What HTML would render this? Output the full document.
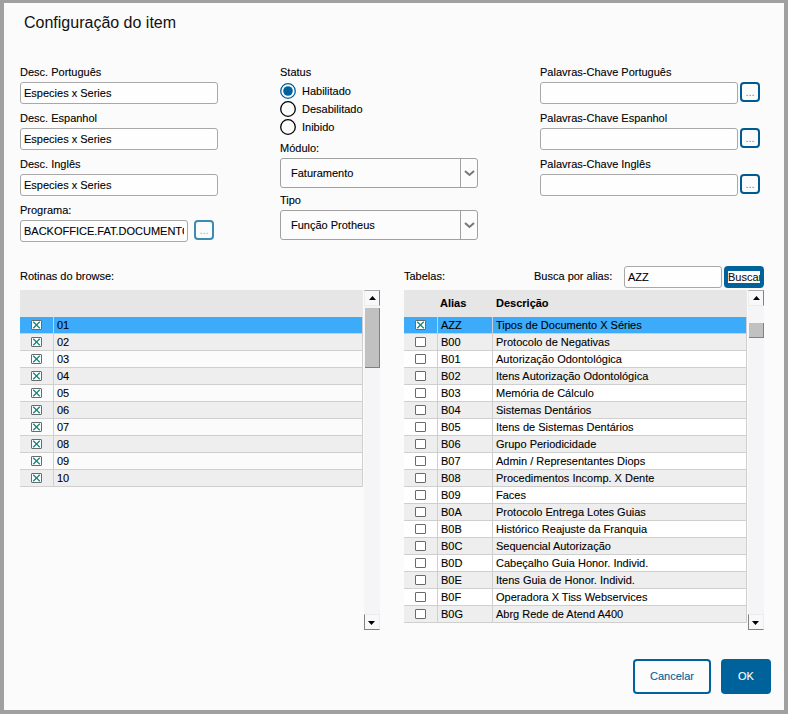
<!DOCTYPE html><html lang="pt"><head><meta charset="utf-8"><title>Configuração do item</title><style>
*{box-sizing:border-box;margin:0;padding:0}
html,body{width:788px;height:714px;overflow:hidden}
body{background:#a0a0a0;font-family:"Liberation Sans",Arial,sans-serif;font-size:11px;color:#000;position:relative;-webkit-text-stroke:0.1px}
#panel{position:absolute;left:4px;top:3px;width:780px;height:707px;background:#fbfbfb}
.a{position:absolute;white-space:nowrap}
.title{left:24px;top:13px;font-size:16px;line-height:20px;color:#111;-webkit-text-stroke:0}
.lbl{font-size:11px;line-height:14px;color:#000}
.inp{height:22px;border:1px solid #a8a8a8;border-radius:3px;background:#fefefe;font-size:11px;line-height:20px;padding:0 3px 0 3px}
.inp u{display:block;text-decoration:none;overflow:hidden;height:20px}
.dots{width:20px;height:20px;border:2px solid #005a92;border-radius:4px;background:#fbfbfb;color:#3f96d0;font-size:11px;line-height:17px;text-align:center}
.dots.dis{border-color:#3d8ab2;color:#8fbdd8}
.sel{height:30px;border:1px solid #a0a0a0;border-radius:3px;background:#fcfcfc;font-size:11px;line-height:28px;padding-left:10px}
.sel i{position:absolute;right:16px;top:0;width:1px;height:28px;background:#a0a0a0}
.sel svg{position:absolute;right:2px;top:11px}
.tbl{background:#fff;overflow:hidden}
.hdr{background:#e6e6e6;height:27px;font-weight:bold;font-size:11px}
.row{position:absolute;left:0;height:17px;width:100%;border-bottom:1px solid #cfcfcf;font-size:11px;line-height:16px}
.row.alt{background:#eee}
.row.sel2{background:#3cabf9}
.row b{position:absolute;top:0;width:1px;height:16px;background:#cfcfcf}
.row span{position:absolute;top:0}
.cb{position:absolute;top:3px;width:11px;height:10px;border:1px solid #6a6a6a;border-radius:1px;background:#fff}
.sb{width:16px;background:#f5f5f8}
.sbb{position:absolute;left:0;width:16px;height:16px;background:#f8f8fa;border:1px solid #ececec}
.sbb.up{border-top-color:#aaa;border-right-color:#808080}
.sbb.dn{border-left-color:#808080;border-bottom-color:#808080}
.thumb{position:absolute;left:1px;width:15px;background:#c1c1c1;border-right:1px solid #808080;border-bottom:1px solid #808080}
.btn{border-radius:4px;font-size:11px;text-align:center}
</style></head><body><div id="panel"></div>
<div class="a title">Configuração do item</div>
<div class="a lbl" style="left:20px;top:65px">Desc. Português</div>
<div class="a inp" style="left:20px;top:82px;width:198px"><u>Especies x Series</u></div>
<div class="a lbl" style="left:20px;top:111px">Desc. Espanhol</div>
<div class="a inp" style="left:20px;top:128px;width:198px"><u>Especies x Series</u></div>
<div class="a lbl" style="left:20px;top:157px">Desc. Inglês</div>
<div class="a inp" style="left:20px;top:174px;width:198px"><u>Especies x Series</u></div>
<div class="a lbl" style="left:20px;top:203px">Programa:</div>
<div class="a inp" style="left:20px;top:220px;width:168px"><u>BACKOFFICE.FAT.DOCUMENTO</u></div>
<div class="a dots dis" style="left:194px;top:220px">...</div>
<div class="a lbl" style="left:280px;top:65px">Status</div>
<svg class="a" style="left:280px;top:83px" width="16" height="16" viewBox="0 0 16 16"><circle cx="8" cy="8" r="7.3" fill="#fbfbfb" stroke="#00629b" stroke-width="1.3"/><circle cx="8" cy="8" r="4.8" fill="#00629b"/></svg>
<div class="a lbl" style="left:302px;top:84px">Habilitado</div>
<svg class="a" style="left:280px;top:101px" width="16" height="16" viewBox="0 0 16 16"><circle cx="8" cy="8" r="7.3" fill="#fbfbfb" stroke="#000" stroke-width="1.3"/></svg>
<div class="a lbl" style="left:302px;top:102px">Desabilitado</div>
<svg class="a" style="left:280px;top:119px" width="16" height="16" viewBox="0 0 16 16"><circle cx="8" cy="8" r="7.3" fill="#fbfbfb" stroke="#000" stroke-width="1.3"/></svg>
<div class="a lbl" style="left:302px;top:120px">Inibido</div>
<div class="a lbl" style="left:280px;top:141px">Módulo:</div>
<div class="a sel" style="left:280px;top:158px;width:198px">Faturamento<i></i><svg width="11" height="7" viewBox="0 0 11 7"><path d="M1 1L5.5 5L10 1" stroke="#777" stroke-width="2" fill="none"/></svg></div>
<div class="a lbl" style="left:280px;top:193px">Tipo</div>
<div class="a sel" style="left:280px;top:210px;width:198px">Função Protheus<i></i><svg width="11" height="7" viewBox="0 0 11 7"><path d="M1 1L5.5 5L10 1" stroke="#777" stroke-width="2" fill="none"/></svg></div>
<div class="a lbl" style="left:540px;top:65px">Palavras-Chave Português</div>
<div class="a inp" style="left:540px;top:82px;width:198px"></div>
<div class="a dots" style="left:740px;top:82px">...</div>
<div class="a lbl" style="left:540px;top:111px">Palavras-Chave Espanhol</div>
<div class="a inp" style="left:540px;top:128px;width:198px"></div>
<div class="a dots" style="left:740px;top:128px">...</div>
<div class="a lbl" style="left:540px;top:157px">Palavras-Chave Inglês</div>
<div class="a inp" style="left:540px;top:174px;width:198px"></div>
<div class="a dots" style="left:740px;top:174px">...</div>
<div class="a lbl" style="left:20px;top:269px">Rotinas do browse:</div>
<div class="a lbl" style="left:404px;top:269px">Tabelas:</div>
<div class="a lbl" style="left:534px;top:269px">Busca por alias:</div>
<div class="a inp" style="left:624px;top:266px;width:98px">AZZ</div>
<div class="a" style="left:724px;top:266px;width:40px;height:22px;border-radius:4px;background:#00629b"><div style="position:absolute;left:4px;top:5px;width:32px;height:12px;background:#fff;overflow:hidden;font-size:11px;line-height:12px;color:#111">Buscar</div></div>
<div class="a tbl" style="left:20px;top:290px;width:343px;height:197px;background:transparent">
<div class="hdr"></div>
<div class="row sel2" style="top:27px"><div class="cb" style="left:11px"><svg width="9" height="8" viewBox="0 0 9 8" style="position:absolute;left:0;top:0"><path d="M1.2 0.8L7.8 7.2M7.8 0.8L1.2 7.2" stroke="#17837e" stroke-width="1.3" fill="none"/></svg></div><b style="left:33px"></b><span style="left:37px">01</span><b style="left:342px"></b></div>
<div class="row alt" style="top:44px"><div class="cb" style="left:11px"><svg width="9" height="8" viewBox="0 0 9 8" style="position:absolute;left:0;top:0"><path d="M1.2 0.8L7.8 7.2M7.8 0.8L1.2 7.2" stroke="#17837e" stroke-width="1.3" fill="none"/></svg></div><b style="left:33px"></b><span style="left:37px">02</span><b style="left:342px"></b></div>
<div class="row" style="top:61px"><div class="cb" style="left:11px"><svg width="9" height="8" viewBox="0 0 9 8" style="position:absolute;left:0;top:0"><path d="M1.2 0.8L7.8 7.2M7.8 0.8L1.2 7.2" stroke="#17837e" stroke-width="1.3" fill="none"/></svg></div><b style="left:33px"></b><span style="left:37px">03</span><b style="left:342px"></b></div>
<div class="row alt" style="top:78px"><div class="cb" style="left:11px"><svg width="9" height="8" viewBox="0 0 9 8" style="position:absolute;left:0;top:0"><path d="M1.2 0.8L7.8 7.2M7.8 0.8L1.2 7.2" stroke="#17837e" stroke-width="1.3" fill="none"/></svg></div><b style="left:33px"></b><span style="left:37px">04</span><b style="left:342px"></b></div>
<div class="row" style="top:95px"><div class="cb" style="left:11px"><svg width="9" height="8" viewBox="0 0 9 8" style="position:absolute;left:0;top:0"><path d="M1.2 0.8L7.8 7.2M7.8 0.8L1.2 7.2" stroke="#17837e" stroke-width="1.3" fill="none"/></svg></div><b style="left:33px"></b><span style="left:37px">05</span><b style="left:342px"></b></div>
<div class="row alt" style="top:112px"><div class="cb" style="left:11px"><svg width="9" height="8" viewBox="0 0 9 8" style="position:absolute;left:0;top:0"><path d="M1.2 0.8L7.8 7.2M7.8 0.8L1.2 7.2" stroke="#17837e" stroke-width="1.3" fill="none"/></svg></div><b style="left:33px"></b><span style="left:37px">06</span><b style="left:342px"></b></div>
<div class="row" style="top:129px"><div class="cb" style="left:11px"><svg width="9" height="8" viewBox="0 0 9 8" style="position:absolute;left:0;top:0"><path d="M1.2 0.8L7.8 7.2M7.8 0.8L1.2 7.2" stroke="#17837e" stroke-width="1.3" fill="none"/></svg></div><b style="left:33px"></b><span style="left:37px">07</span><b style="left:342px"></b></div>
<div class="row alt" style="top:146px"><div class="cb" style="left:11px"><svg width="9" height="8" viewBox="0 0 9 8" style="position:absolute;left:0;top:0"><path d="M1.2 0.8L7.8 7.2M7.8 0.8L1.2 7.2" stroke="#17837e" stroke-width="1.3" fill="none"/></svg></div><b style="left:33px"></b><span style="left:37px">08</span><b style="left:342px"></b></div>
<div class="row" style="top:163px"><div class="cb" style="left:11px"><svg width="9" height="8" viewBox="0 0 9 8" style="position:absolute;left:0;top:0"><path d="M1.2 0.8L7.8 7.2M7.8 0.8L1.2 7.2" stroke="#17837e" stroke-width="1.3" fill="none"/></svg></div><b style="left:33px"></b><span style="left:37px">09</span><b style="left:342px"></b></div>
<div class="row alt" style="top:180px"><div class="cb" style="left:11px"><svg width="9" height="8" viewBox="0 0 9 8" style="position:absolute;left:0;top:0"><path d="M1.2 0.8L7.8 7.2M7.8 0.8L1.2 7.2" stroke="#17837e" stroke-width="1.3" fill="none"/></svg></div><b style="left:33px"></b><span style="left:37px">10</span><b style="left:342px"></b></div>
</div>
<div class="a sb" style="left:364px;top:290px;height:340px"><div class="sbb up" style="top:0"><svg width="7" height="4" viewBox="0 0 7 4" style="position:absolute;left:4px;top:5px"><path d="M0 4L3.5 0L7 4Z" fill="#000"/></svg></div><div class="thumb" style="top:18px;height:60px"></div><div class="sbb dn" style="top:324px"><svg width="7" height="4" viewBox="0 0 7 4" style="position:absolute;left:3px;top:6px"><path d="M0 0L3.5 4L7 0Z" fill="#000"/></svg></div></div>
<div class="a tbl" style="left:404px;top:290px;width:343px;height:333px">
<div class="hdr"><span class="a" style="left:36px;top:7px">Alias</span><span class="a" style="left:92px;top:7px">Descrição</span></div>
<div class="row sel2" style="top:27px"><div class="cb" style="left:11px"><svg width="9" height="8" viewBox="0 0 9 8" style="position:absolute;left:0;top:0"><path d="M1.2 0.8L7.8 7.2M7.8 0.8L1.2 7.2" stroke="#17837e" stroke-width="1.3" fill="none"/></svg></div><b style="left:33px"></b><span style="left:37px">AZZ</span><b style="left:88px"></b><span style="left:92px">Tipos de Documento X Séries</span><b style="left:342px"></b></div>
<div class="row alt" style="top:44px"><div class="cb" style="left:11px"></div><b style="left:33px"></b><span style="left:37px">B00</span><b style="left:88px"></b><span style="left:92px">Protocolo de Negativas</span><b style="left:342px"></b></div>
<div class="row" style="top:61px"><div class="cb" style="left:11px"></div><b style="left:33px"></b><span style="left:37px">B01</span><b style="left:88px"></b><span style="left:92px">Autorização Odontológica</span><b style="left:342px"></b></div>
<div class="row alt" style="top:78px"><div class="cb" style="left:11px"></div><b style="left:33px"></b><span style="left:37px">B02</span><b style="left:88px"></b><span style="left:92px">Itens Autorização Odontológica</span><b style="left:342px"></b></div>
<div class="row" style="top:95px"><div class="cb" style="left:11px"></div><b style="left:33px"></b><span style="left:37px">B03</span><b style="left:88px"></b><span style="left:92px">Memória de Cálculo</span><b style="left:342px"></b></div>
<div class="row alt" style="top:112px"><div class="cb" style="left:11px"></div><b style="left:33px"></b><span style="left:37px">B04</span><b style="left:88px"></b><span style="left:92px">Sistemas Dentários</span><b style="left:342px"></b></div>
<div class="row" style="top:129px"><div class="cb" style="left:11px"></div><b style="left:33px"></b><span style="left:37px">B05</span><b style="left:88px"></b><span style="left:92px">Itens de Sistemas Dentários</span><b style="left:342px"></b></div>
<div class="row alt" style="top:146px"><div class="cb" style="left:11px"></div><b style="left:33px"></b><span style="left:37px">B06</span><b style="left:88px"></b><span style="left:92px">Grupo Periodicidade</span><b style="left:342px"></b></div>
<div class="row" style="top:163px"><div class="cb" style="left:11px"></div><b style="left:33px"></b><span style="left:37px">B07</span><b style="left:88px"></b><span style="left:92px">Admin / Representantes Diops</span><b style="left:342px"></b></div>
<div class="row alt" style="top:180px"><div class="cb" style="left:11px"></div><b style="left:33px"></b><span style="left:37px">B08</span><b style="left:88px"></b><span style="left:92px">Procedimentos Incomp. X Dente</span><b style="left:342px"></b></div>
<div class="row" style="top:197px"><div class="cb" style="left:11px"></div><b style="left:33px"></b><span style="left:37px">B09</span><b style="left:88px"></b><span style="left:92px">Faces</span><b style="left:342px"></b></div>
<div class="row alt" style="top:214px"><div class="cb" style="left:11px"></div><b style="left:33px"></b><span style="left:37px">B0A</span><b style="left:88px"></b><span style="left:92px">Protocolo Entrega Lotes Guias</span><b style="left:342px"></b></div>
<div class="row" style="top:231px"><div class="cb" style="left:11px"></div><b style="left:33px"></b><span style="left:37px">B0B</span><b style="left:88px"></b><span style="left:92px">Histórico Reajuste da Franquia</span><b style="left:342px"></b></div>
<div class="row alt" style="top:248px"><div class="cb" style="left:11px"></div><b style="left:33px"></b><span style="left:37px">B0C</span><b style="left:88px"></b><span style="left:92px">Sequencial Autorização</span><b style="left:342px"></b></div>
<div class="row" style="top:265px"><div class="cb" style="left:11px"></div><b style="left:33px"></b><span style="left:37px">B0D</span><b style="left:88px"></b><span style="left:92px">Cabeçalho Guia Honor. Individ.</span><b style="left:342px"></b></div>
<div class="row alt" style="top:282px"><div class="cb" style="left:11px"></div><b style="left:33px"></b><span style="left:37px">B0E</span><b style="left:88px"></b><span style="left:92px">Itens Guia de Honor. Individ.</span><b style="left:342px"></b></div>
<div class="row" style="top:299px"><div class="cb" style="left:11px"></div><b style="left:33px"></b><span style="left:37px">B0F</span><b style="left:88px"></b><span style="left:92px">Operadora X Tiss Webservices</span><b style="left:342px"></b></div>
<div class="row alt" style="top:316px"><div class="cb" style="left:11px"></div><b style="left:33px"></b><span style="left:37px">B0G</span><b style="left:88px"></b><span style="left:92px">Abrg Rede de Atend A400</span><b style="left:342px"></b></div>
</div>
<div class="a sb" style="left:748px;top:290px;height:340px"><div class="sbb up" style="top:0"><svg width="7" height="4" viewBox="0 0 7 4" style="position:absolute;left:4px;top:5px"><path d="M0 4L3.5 0L7 4Z" fill="#000"/></svg></div><div class="thumb" style="top:33px;height:15px"></div><div class="sbb dn" style="top:324px"><svg width="7" height="4" viewBox="0 0 7 4" style="position:absolute;left:3px;top:6px"><path d="M0 0L3.5 4L7 0Z" fill="#000"/></svg></div></div>
<div class="a btn" style="left:633px;top:659px;width:78px;height:35px;border:2px solid #00629b;background:#fcfcfc;color:#00629b;line-height:31px">Cancelar</div>
<div class="a btn" style="left:721px;top:659px;width:50px;height:35px;background:#00629b;color:#fff;line-height:35px">OK</div>
</body></html>
